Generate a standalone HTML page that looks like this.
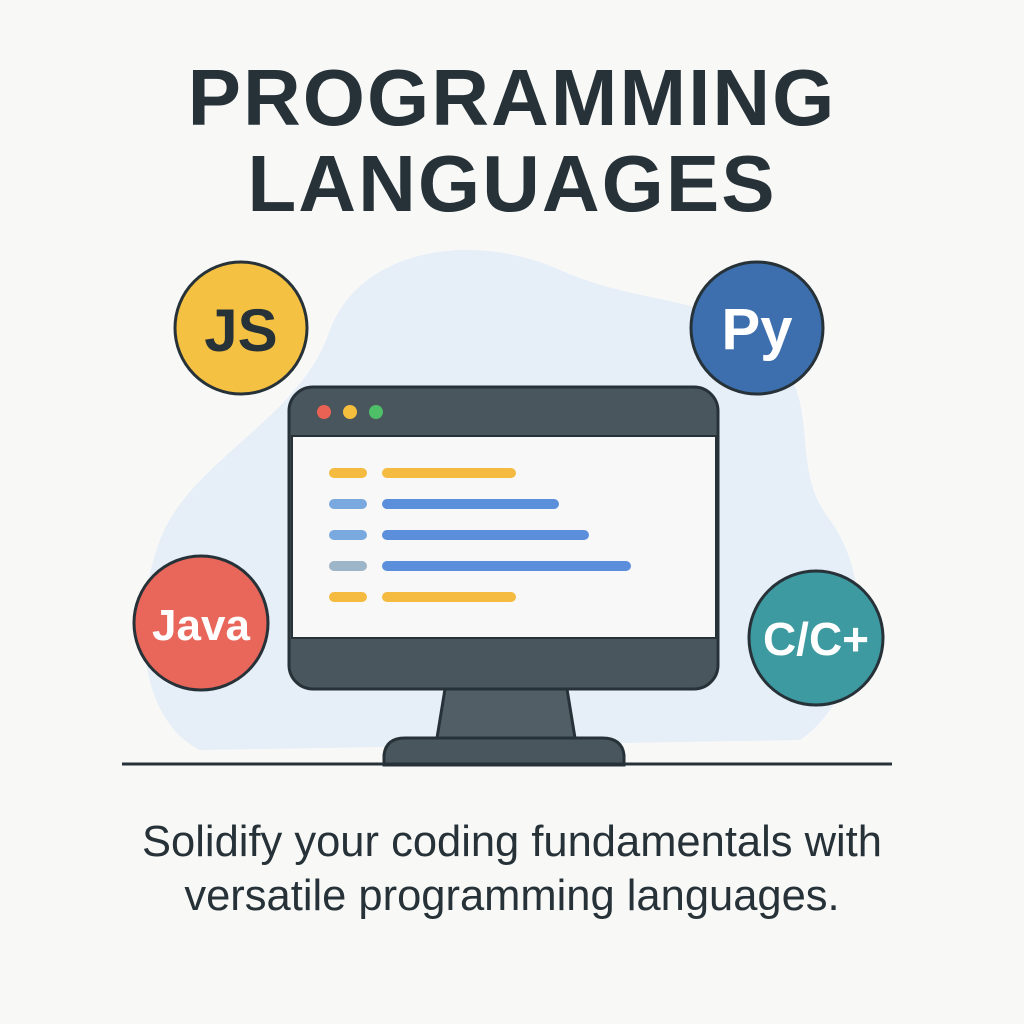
<!DOCTYPE html>
<html><head><style>
html,body{margin:0;padding:0;background:#f8f8f7;}
body{width:1024px;height:1024px;position:relative;overflow:hidden;font-family:"Liberation Sans",sans-serif;}
.t{position:absolute;left:0;width:1024px;text-align:center;color:#263238;font-weight:bold;font-size:80px;letter-spacing:2px;}
.s{position:absolute;left:0;width:1024px;text-align:center;color:#263238;font-size:43.5px;}
</style></head><body>
<div class="t" style="top:52px">PROGRAMMING</div>
<div class="t" style="top:138px">LANGUAGES</div>
<svg width="1024" height="1024" style="position:absolute;left:0;top:0">
<path d="M330 330 C360 250 470 230 560 270 C650 310 720 290 780 360 C820 410 790 470 830 520 C880 590 860 700 800 740 L200 750 C140 720 130 620 160 540 C190 460 300 420 330 330Z" fill="#e6eef7"/>
<rect x="289" y="387" width="429" height="302" rx="24" fill="#4a565e" stroke="#263238" stroke-width="3"/>
<rect x="292" y="436" width="424" height="202" fill="#f8f8f8" stroke="#263238" stroke-width="2"/>
<circle cx="324" cy="412" r="7" fill="#ea6254"/>
<circle cx="350" cy="412" r="7" fill="#f5be3c"/>
<circle cx="376" cy="412" r="7" fill="#4fbf68"/>
<g stroke-linecap="round" stroke-width="10">
<line x1="334" y1="473" x2="362" y2="473" stroke="#f5bb40"/><line x1="387" y1="473" x2="511" y2="473" stroke="#f5bb40"/>
<line x1="334" y1="504" x2="362" y2="504" stroke="#7aa9e0"/><line x1="387" y1="504" x2="554" y2="504" stroke="#5b8fdc"/>
<line x1="334" y1="535" x2="362" y2="535" stroke="#7aa9e0"/><line x1="387" y1="535" x2="584" y2="535" stroke="#5b8fdc"/>
<line x1="334" y1="566" x2="362" y2="566" stroke="#9db5c8"/><line x1="387" y1="566" x2="626" y2="566" stroke="#5b8fdc"/>
<line x1="334" y1="597" x2="362" y2="597" stroke="#f5bb40"/><line x1="387" y1="597" x2="511" y2="597" stroke="#f5bb40"/>
</g>
<path d="M445 689 L567 689 L575 738 L437 738Z" fill="#525e66" stroke="#263238" stroke-width="3"/>
<path d="M384 765 L384 755 Q386 738 405 738 L602 738 Q622 738 624 755 L624 765Z" fill="#4a565e" stroke="#263238" stroke-width="3"/>
<line x1="122" y1="764" x2="892" y2="764" stroke="#263238" stroke-width="3"/>
<g stroke="#263238" stroke-width="3" font-family="Liberation Sans,sans-serif" font-weight="bold" text-anchor="middle">
<circle cx="241" cy="328" r="66" fill="#f5c142"/>
<text x="241" y="351" font-size="60" fill="#263238" stroke="none">JS</text>
<circle cx="757" cy="328" r="66" fill="#3d6fae"/>
<text x="757" y="349" font-size="58" fill="#fff" stroke="none">Py</text>
<circle cx="201" cy="623" r="67" fill="#e8675a"/>
<text x="201" y="640" font-size="44" fill="#fff" stroke="none">Java</text>
<circle cx="816" cy="638" r="67" fill="#3d9aa0"/>
<text x="816" y="655" font-size="46" fill="#fff" stroke="none">C/C+</text>
</g>
</svg>
<div class="s" style="top:818px">Solidify your coding fundamentals with</div>
<div class="s" style="top:872px">versatile programming languages.</div>
</body></html>
